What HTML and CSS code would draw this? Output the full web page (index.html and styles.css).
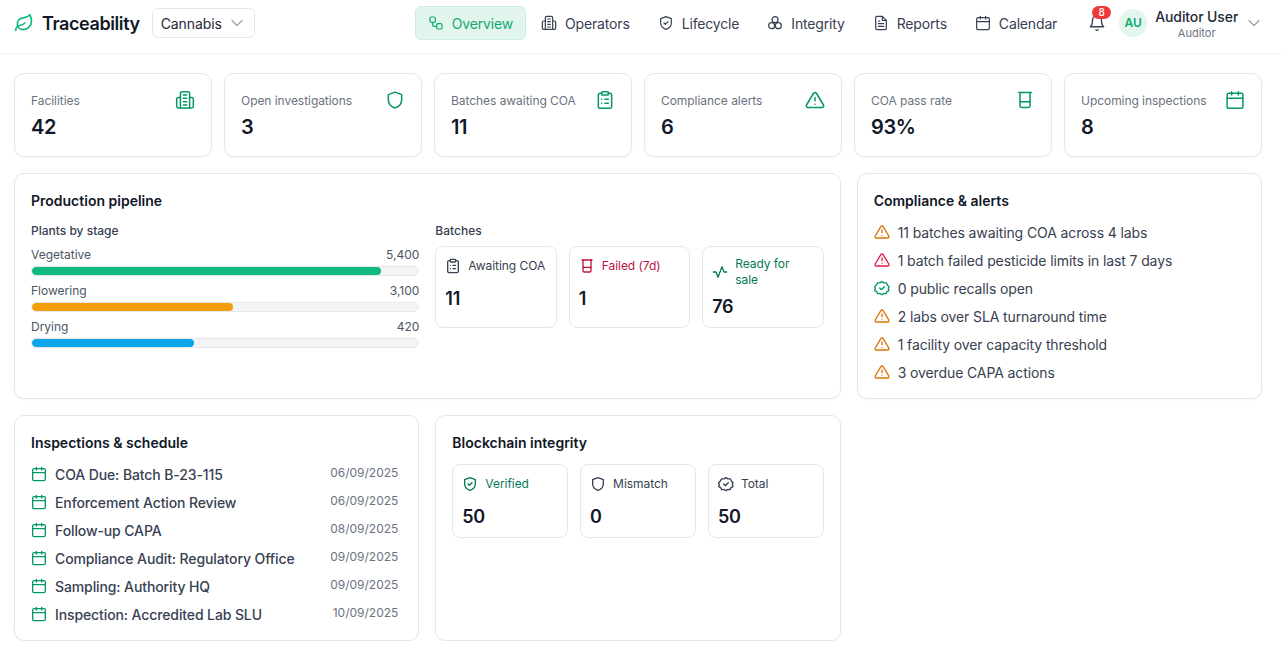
FILE: index.html
```html
<!DOCTYPE html>
<html lang="en">
<head>
    <meta charset="UTF-8">
    <title>Traceability</title>
    <link rel="stylesheet" href="styles.css">
</head>
<body>
    <svg class="icon-defs" width="0" height="0" aria-hidden="true">
        <symbol id="i-building" viewBox="0 0 24 24"><path d="M6.500 21.500V4a2 2 0 0 1 2-2h7a2 2 0 0 1 2 2v17.500"/><path d="M6.500 9H4a2 2 0 0 0-2 2v8.500a2 2 0 0 0 2 2h16a2 2 0 0 0 2-2V11a2 2 0 0 0-2-2h-2.500"/><path d="M10 6h4M10 10h4M10 14h4M10 18h4"/></symbol>
        <symbol id="i-shield" viewBox="0 0 24 24"><path d="M12 2.500l8 3v6.500c0 5-3.500 8-8 9.500-4.500-1.500-8-4.500-8-9.500V5.500z"/></symbol>
        <symbol id="i-shield-check" viewBox="0 0 24 24"><path d="M12 2.500l8 3v6.500c0 5-3.500 8-8 9.500-4.500-1.500-8-4.500-8-9.500V5.500z"/><path d="M9 12l2 2 4-4"/></symbol>
        <symbol id="i-clipboard" viewBox="0 0 24 24"><rect x="8" y="2" width="8" height="4" rx="1"/><path d="M16 4h2a2 2 0 0 1 2 2v14a2 2 0 0 1-2 2H6a2 2 0 0 1-2-2V6a2 2 0 0 1 2-2h2"/><path d="M12 11h4M12 16h4M8 11h.01M8 16h.01"/></symbol>
        <symbol id="i-warning" viewBox="0 0 24 24"><path d="M10.300 3.900L1.800 18a2 2 0 0 0 1.700 3h17a2 2 0 0 0 1.700-3L13.700 3.900a2 2 0 0 0-3.400 0z"/><path d="M12 9v4M12 17h.01"/></symbol>
        <symbol id="i-beaker" viewBox="0 0 24 24"><path d="M4.500 3h15"/><path d="M6 3v16a2 2 0 0 0 2 2h8a2 2 0 0 0 2-2V3"/><path d="M6 14h12"/></symbol>
        <symbol id="i-calendar" viewBox="0 0 24 24"><rect x="2.500" y="4" width="19" height="18" rx="2"/><path d="M8 2v4M16 2v4M2.500 10h19"/></symbol>
        <symbol id="i-badge-check" viewBox="0 0 24 24"><path d="M12 2.500l3 1.800 3.500-.1 1.500 3.200 2.500 2.600-1 3 1 3-3 1.500-1.500 3-3.500-.2-2.500 1.700-3-1.700-3.500.2-1.500-3-3-1.500 1-3-1-3 2.500-2.600L5.500 4.200 9 4.300z"/><path d="M8.500 12l2.500 2.500 4.500-4.500"/></symbol>
    </svg>

    <header class="topbar">
        <div class="brand">
            <svg class="logo" viewBox="0 0 24 24"><path d="M11 20A7 7 0 0 1 9.800 6.100C15.500 5 17 4.500 19 2c1 2 2 4.200 2 8 0 5.500-4.800 10-10 10z"/><path d="M2 21c0-3 1.900-5.400 5-6 2.500-.5 5-2 6-3"/></svg>
            <span class="brand-name">Traceability</span>
        </div>
        <div class="crop-select">
            <span>Cannabis</span>
            <svg class="chevron" viewBox="0 0 24 24"><path d="M6 9l6 6 6-6"/></svg>
        </div>
        <nav class="nav">
            <a class="nav-item active"><svg class="icon" viewBox="0 0 24 24"><rect x="3" y="3" width="8" height="8" rx="2"/><path d="M7 11v4a2 2 0 0 0 2 2h4"/><rect x="13" y="13" width="8" height="8" rx="2"/></svg>Overview</a>
            <a class="nav-item"><svg class="icon"><use href="#i-building"/></svg>Operators</a>
            <a class="nav-item"><svg class="icon"><use href="#i-shield-check"/></svg>Lifecycle</a>
            <a class="nav-item"><svg class="icon" viewBox="0 0 24 24"><circle cx="12" cy="7" r="4.500"/><circle cx="7" cy="16" r="4.500"/><circle cx="17" cy="16" r="4.500"/></svg>Integrity</a>
            <a class="nav-item"><svg class="icon" viewBox="0 0 24 24"><path d="M14 2H6a2 2 0 0 0-2 2v16a2 2 0 0 0 2 2h12a2 2 0 0 0 2-2V8z"/><path d="M14 2v6h6M16 13H8M16 17H8M10 9H8"/></svg>Reports</a>
            <a class="nav-item"><svg class="icon"><use href="#i-calendar"/></svg>Calendar</a>
        </nav>
        <div class="bell">
            <svg class="bell-icon" viewBox="0 0 24 24"><path d="M6 8a6 6 0 0 1 12 0c0 7 3 9 3 9H3s3-2 3-9"/><path d="M10.500 21a1.700 1.700 0 0 0 3 0"/></svg>
            <span class="bell-badge">8</span>
        </div>
        <div class="user">
            <span class="avatar">AU</span>
            <div class="user-text">
                <div class="user-name">Auditor User</div>
                <div class="user-role">Auditor</div>
            </div>
            <svg class="chevron" viewBox="0 0 24 24"><path d="M6 9l6 6 6-6"/></svg>
        </div>
    </header>

    <main class="page">
        <section class="stats">
            <div class="card stat"><div><div class="stat-label">Facilities</div><div class="stat-value">42</div></div><svg class="stat-icon"><use href="#i-building"/></svg></div>
            <div class="card stat"><div><div class="stat-label">Open investigations</div><div class="stat-value">3</div></div><svg class="stat-icon"><use href="#i-shield"/></svg></div>
            <div class="card stat"><div><div class="stat-label">Batches awaiting COA</div><div class="stat-value">11</div></div><svg class="stat-icon"><use href="#i-clipboard"/></svg></div>
            <div class="card stat"><div><div class="stat-label">Compliance alerts</div><div class="stat-value">6</div></div><svg class="stat-icon"><use href="#i-warning"/></svg></div>
            <div class="card stat"><div><div class="stat-label">COA pass rate</div><div class="stat-value">93%</div></div><svg class="stat-icon"><use href="#i-beaker"/></svg></div>
            <div class="card stat"><div><div class="stat-label">Upcoming inspections</div><div class="stat-value">8</div></div><svg class="stat-icon"><use href="#i-calendar"/></svg></div>
        </section>

        <section class="panels">
            <div class="card panel pipeline">
                <h2>Production pipeline</h2>
                <div class="pipeline-cols">
                    <div>
                        <h3>Plants by stage</h3>
                        <div class="stage">
                            <div class="stage-row"><span>Vegetative</span><span>5,400</span></div>
                            <div class="track"><div class="fill green" style="width: 90.4%"></div></div>
                        </div>
                        <div class="stage">
                            <div class="stage-row"><span>Flowering</span><span>3,100</span></div>
                            <div class="track"><div class="fill orange" style="width: 52%"></div></div>
                        </div>
                        <div class="stage">
                            <div class="stage-row"><span>Drying</span><span>420</span></div>
                            <div class="track"><div class="fill blue" style="width: 42%"></div></div>
                        </div>
                    </div>
                    <div>
                        <h3>Batches</h3>
                        <div class="batch-cards">
                            <div class="mini batch"><div class="mini-head"><svg class="icon"><use href="#i-clipboard"/></svg><span>Awaiting COA</span></div><div class="mini-value">11</div></div>
                            <div class="mini batch"><div class="mini-head red"><svg class="icon"><use href="#i-beaker"/></svg><span>Failed (7d)</span></div><div class="mini-value">1</div></div>
                            <div class="mini batch"><div class="mini-head teal wrapped"><svg class="icon" viewBox="0 0 24 24"><path d="M2 12h4l3 8 6-16 3 8h4"/></svg><span>Ready for sale</span></div><div class="mini-value tight">76</div></div>
                        </div>
                    </div>
                </div>
            </div>

            <div class="card panel">
                <h2>Compliance &amp; alerts</h2>
                <ul class="list alerts">
                    <li><svg class="icon amber"><use href="#i-warning"/></svg>11 batches awaiting COA across 4 labs</li>
                    <li><svg class="icon rose"><use href="#i-warning"/></svg>1 batch failed pesticide limits in last 7 days</li>
                    <li><svg class="icon emerald"><use href="#i-badge-check"/></svg>0 public recalls open</li>
                    <li><svg class="icon amber"><use href="#i-warning"/></svg>2 labs over SLA turnaround time</li>
                    <li><svg class="icon amber"><use href="#i-warning"/></svg>1 facility over capacity threshold</li>
                    <li><svg class="icon amber"><use href="#i-warning"/></svg>3 overdue CAPA actions</li>
                </ul>
            </div>

            <div class="card panel">
                <h2>Inspections &amp; schedule</h2>
                <ul class="list schedule">
                    <li><svg class="icon emerald"><use href="#i-calendar"/></svg><span class="event">COA Due: Batch B-23-115</span><span class="date">06/09/2025</span></li>
                    <li><svg class="icon emerald"><use href="#i-calendar"/></svg><span class="event">Enforcement Action Review</span><span class="date">06/09/2025</span></li>
                    <li><svg class="icon emerald"><use href="#i-calendar"/></svg><span class="event">Follow-up CAPA</span><span class="date">08/09/2025</span></li>
                    <li><svg class="icon emerald"><use href="#i-calendar"/></svg><span class="event">Compliance Audit: Regulatory Office</span><span class="date">09/09/2025</span></li>
                    <li><svg class="icon emerald"><use href="#i-calendar"/></svg><span class="event">Sampling: Authority HQ</span><span class="date">09/09/2025</span></li>
                    <li><svg class="icon emerald"><use href="#i-calendar"/></svg><span class="event">Inspection: Accredited Lab SLU</span><span class="date">10/09/2025</span></li>
                </ul>
            </div>

            <div class="card panel">
                <h2>Blockchain integrity</h2>
                <div class="chain-cards">
                    <div class="mini"><div class="mini-head teal"><svg class="icon"><use href="#i-shield-check"/></svg><span>Verified</span></div><div class="mini-value">50</div></div>
                    <div class="mini"><div class="mini-head"><svg class="icon"><use href="#i-shield"/></svg><span>Mismatch</span></div><div class="mini-value">0</div></div>
                    <div class="mini"><div class="mini-head"><svg class="icon"><use href="#i-badge-check"/></svg><span>Total</span></div><div class="mini-value">50</div></div>
                </div>
            </div>
        </section>
    </main>
</body>
</html>
```

FILE: styles.css
```css
* {
    box-sizing: border-box;
}

body {
    margin: 0;
    background-color: #fff;
    color: #111827;
    font-family: Inter, "Liberation Sans", sans-serif;
}

.icon-defs {
    position: absolute;
}

svg {
    fill: none;
    stroke: currentColor;
    stroke-width: 2;
    stroke-linecap: round;
    stroke-linejoin: round;
    flex-shrink: 0;
}

.icon {
    width: 16px;
    height: 16px;
}

/* Top bar */
.topbar {
    display: flex;
    align-items: center;
    height: 54px;
    padding: 0 21px 7px 14px;
    border-bottom: 1px solid #f0f1f3;
    white-space: nowrap;
}

.brand {
    display: flex;
    align-items: center;
    gap: 8px;
}

.logo {
    width: 20px;
    height: 20px;
    color: #10b981;
}

.brand-name {
    font-size: 18px;
    font-weight: 600;
    letter-spacing: -0.4px;
}

.crop-select {
    display: flex;
    flex-shrink: 0;
    align-items: center;
    justify-content: space-between;
    width: 103px;
    height: 30px;
    margin-left: 12px;
    padding: 0 7px 0 8px;
    border: 1px solid #e5e7eb;
    border-radius: 6px;
    font-size: 14px;
    letter-spacing: -0.1px;
    color: #1f2937;
}

.chevron {
    width: 20px;
    height: 20px;
    color: #9ca3af;
    stroke-width: 1.5;
}

.nav {
    display: flex;
    flex-shrink: 0;
    align-items: center;
    gap: 2px;
    margin-left: 160px;
}

.nav-item {
    display: flex;
    align-items: center;
    gap: 8px;
    height: 34px;
    padding: 0 12px;
    border: 1px solid transparent;
    border-radius: 6px;
    font-size: 14px;
    letter-spacing: -0.16px;
    color: #374151;
}

.nav-item .icon {
    stroke-width: 1.8;
}

.nav-item.active {
    background-color: #e3f6ee;
    border-color: #c9eedd;
    color: #10a970;
}

.bell {
    position: relative;
    flex-shrink: 0;
    width: 18px;
    height: 18px;
    margin-left: 18px;
    color: #374151;
}

.bell-icon {
    display: block;
    width: 18px;
    height: 18px;
    stroke-width: 1.8;
}

.bell-badge {
    position: absolute;
    top: -8px;
    left: 4px;
    width: 19px;
    height: 13px;
    border-radius: 7px;
    background-color: #ef3a3a;
    color: #fff;
    font-size: 10px;
    font-weight: 500;
    line-height: 13px;
    text-align: center;
}

.user {
    display: flex;
    flex-shrink: 0;
    align-items: center;
    margin-left: 13px;
}

.avatar {
    width: 28px;
    height: 28px;
    border-radius: 50%;
    background-color: #e3f6ee;
    color: #10a970;
    font-size: 12px;
    font-weight: 600;
    line-height: 28px;
    text-align: center;
}

.user-text {
    margin: 3px 6px 0 8px;
    text-align: center;
}

.user-name {
    font-size: 14px;
    font-weight: 500;
    letter-spacing: -0.11px;
    line-height: 17px;
    color: #1f2937;
}

.user-role {
    margin-top: 1px;
    font-size: 11px;
    line-height: 15px;
    color: #6b7280;
}

/* Page */
.page {
    padding: 19px 21px 0 14px;
}

.card {
    background-color: #fff;
    border: 1px solid #e5e7eb;
    border-radius: 10px;
    box-shadow: 0 1px 2px rgba(0, 0, 0, 0.04);
}

.stats {
    display: grid;
    grid-template-columns: repeat(6, 1fr);
    gap: 12px;
}

.stat {
    display: flex;
    justify-content: space-between;
    height: 84px;
    padding: 16px;
}

.stat-label {
    margin-top: 3px;
    font-size: 12px;
    letter-spacing: -0.05px;
    line-height: 16px;
    color: #6b7280;
}

.stat-value {
    margin-top: 4px;
    font-size: 20px;
    font-weight: 600;
    letter-spacing: -0.4px;
    line-height: 28px;
}

.stat-icon {
    width: 20px;
    height: 20px;
    color: #059669;
    stroke-width: 1.8;
}

.panels {
    display: grid;
    grid-template-columns: repeat(3, 1fr);
    grid-template-rows: 226px 226px;
    gap: 16px;
    margin-top: 16px;
}

.pipeline {
    grid-column: span 2;
}

.panel {
    padding: 16px;
}

h2 {
    margin: 1px 0 0;
    font-size: 14px;
    font-weight: 600;
    line-height: 20px;
}

h3 {
    margin: 0;
    font-size: 12px;
    font-weight: 500;
    line-height: 16px;
    color: #374151;
}

.pipeline-cols {
    display: grid;
    grid-template-columns: 1fr 1fr;
    gap: 16px;
    margin-top: 12px;
}

.stage {
    margin-top: 8px;
}

.stage + .stage {
    margin-top: 7px;
}

.stage-row {
    display: flex;
    justify-content: space-between;
    font-size: 12px;
    line-height: 16px;
    color: #4b5563;
}

.track {
    height: 10px;
    margin-top: 3px;
    border: 1px solid #e5e7eb;
    border-radius: 5px;
    background-color: #f3f4f6;
    overflow: hidden;
}

.fill {
    height: 100%;
    border-radius: 4px;
}

.green { background-color: #10b981; }
.orange { background-color: #f59e0b; }
.blue { background-color: #0ea5e9; }

.mini {
    border: 1px solid #e5e7eb;
    border-radius: 8px;
    padding: 11px 9px 9px;
}

.batch-cards {
    display: grid;
    grid-template-columns: repeat(3, 1fr);
    gap: 12px;
    margin-top: 7px;
}

.batch {
    height: 82px;
}

.chain-cards {
    display: grid;
    grid-template-columns: repeat(3, 1fr);
    gap: 12px;
    margin-top: 11px;
}

.chain-cards .mini {
    height: 74px;
}

.mini-head {
    display: flex;
    align-items: center;
    gap: 7px;
    min-height: 16px;
    font-size: 12px;
    letter-spacing: -0.05px;
    line-height: 16px;
    color: #374151;
}

.mini-head.wrapped {
    margin-top: -2px;
}

.mini-value {
    margin-top: 11px;
    font-size: 18px;
    font-weight: 600;
    letter-spacing: -0.3px;
    line-height: 28px;
}

.mini-value.tight {
    margin-top: 5px;
}

.red { color: #be123c; }
.teal { color: #047857; }

.list {
    margin: 0;
    padding: 0;
    list-style: none;
}

.list li {
    display: flex;
    align-items: center;
    height: 28px;
    font-size: 14px;
    letter-spacing: -0.11px;
    color: #374151;
}

.list .icon {
    margin-right: 8px;
}

.alerts {
    margin-top: 7px;
}

.schedule {
    margin-top: 7px;
}

.event {
    flex: 1;
    font-weight: 500;
}

.date {
    position: relative;
    top: -2px;
    padding-right: 4px;
    font-size: 12px;
    letter-spacing: 0;
    color: #6b7280;
}

.amber { color: #d97706; }
.rose { color: #e11d48; }
.emerald { color: #059669; }
```
